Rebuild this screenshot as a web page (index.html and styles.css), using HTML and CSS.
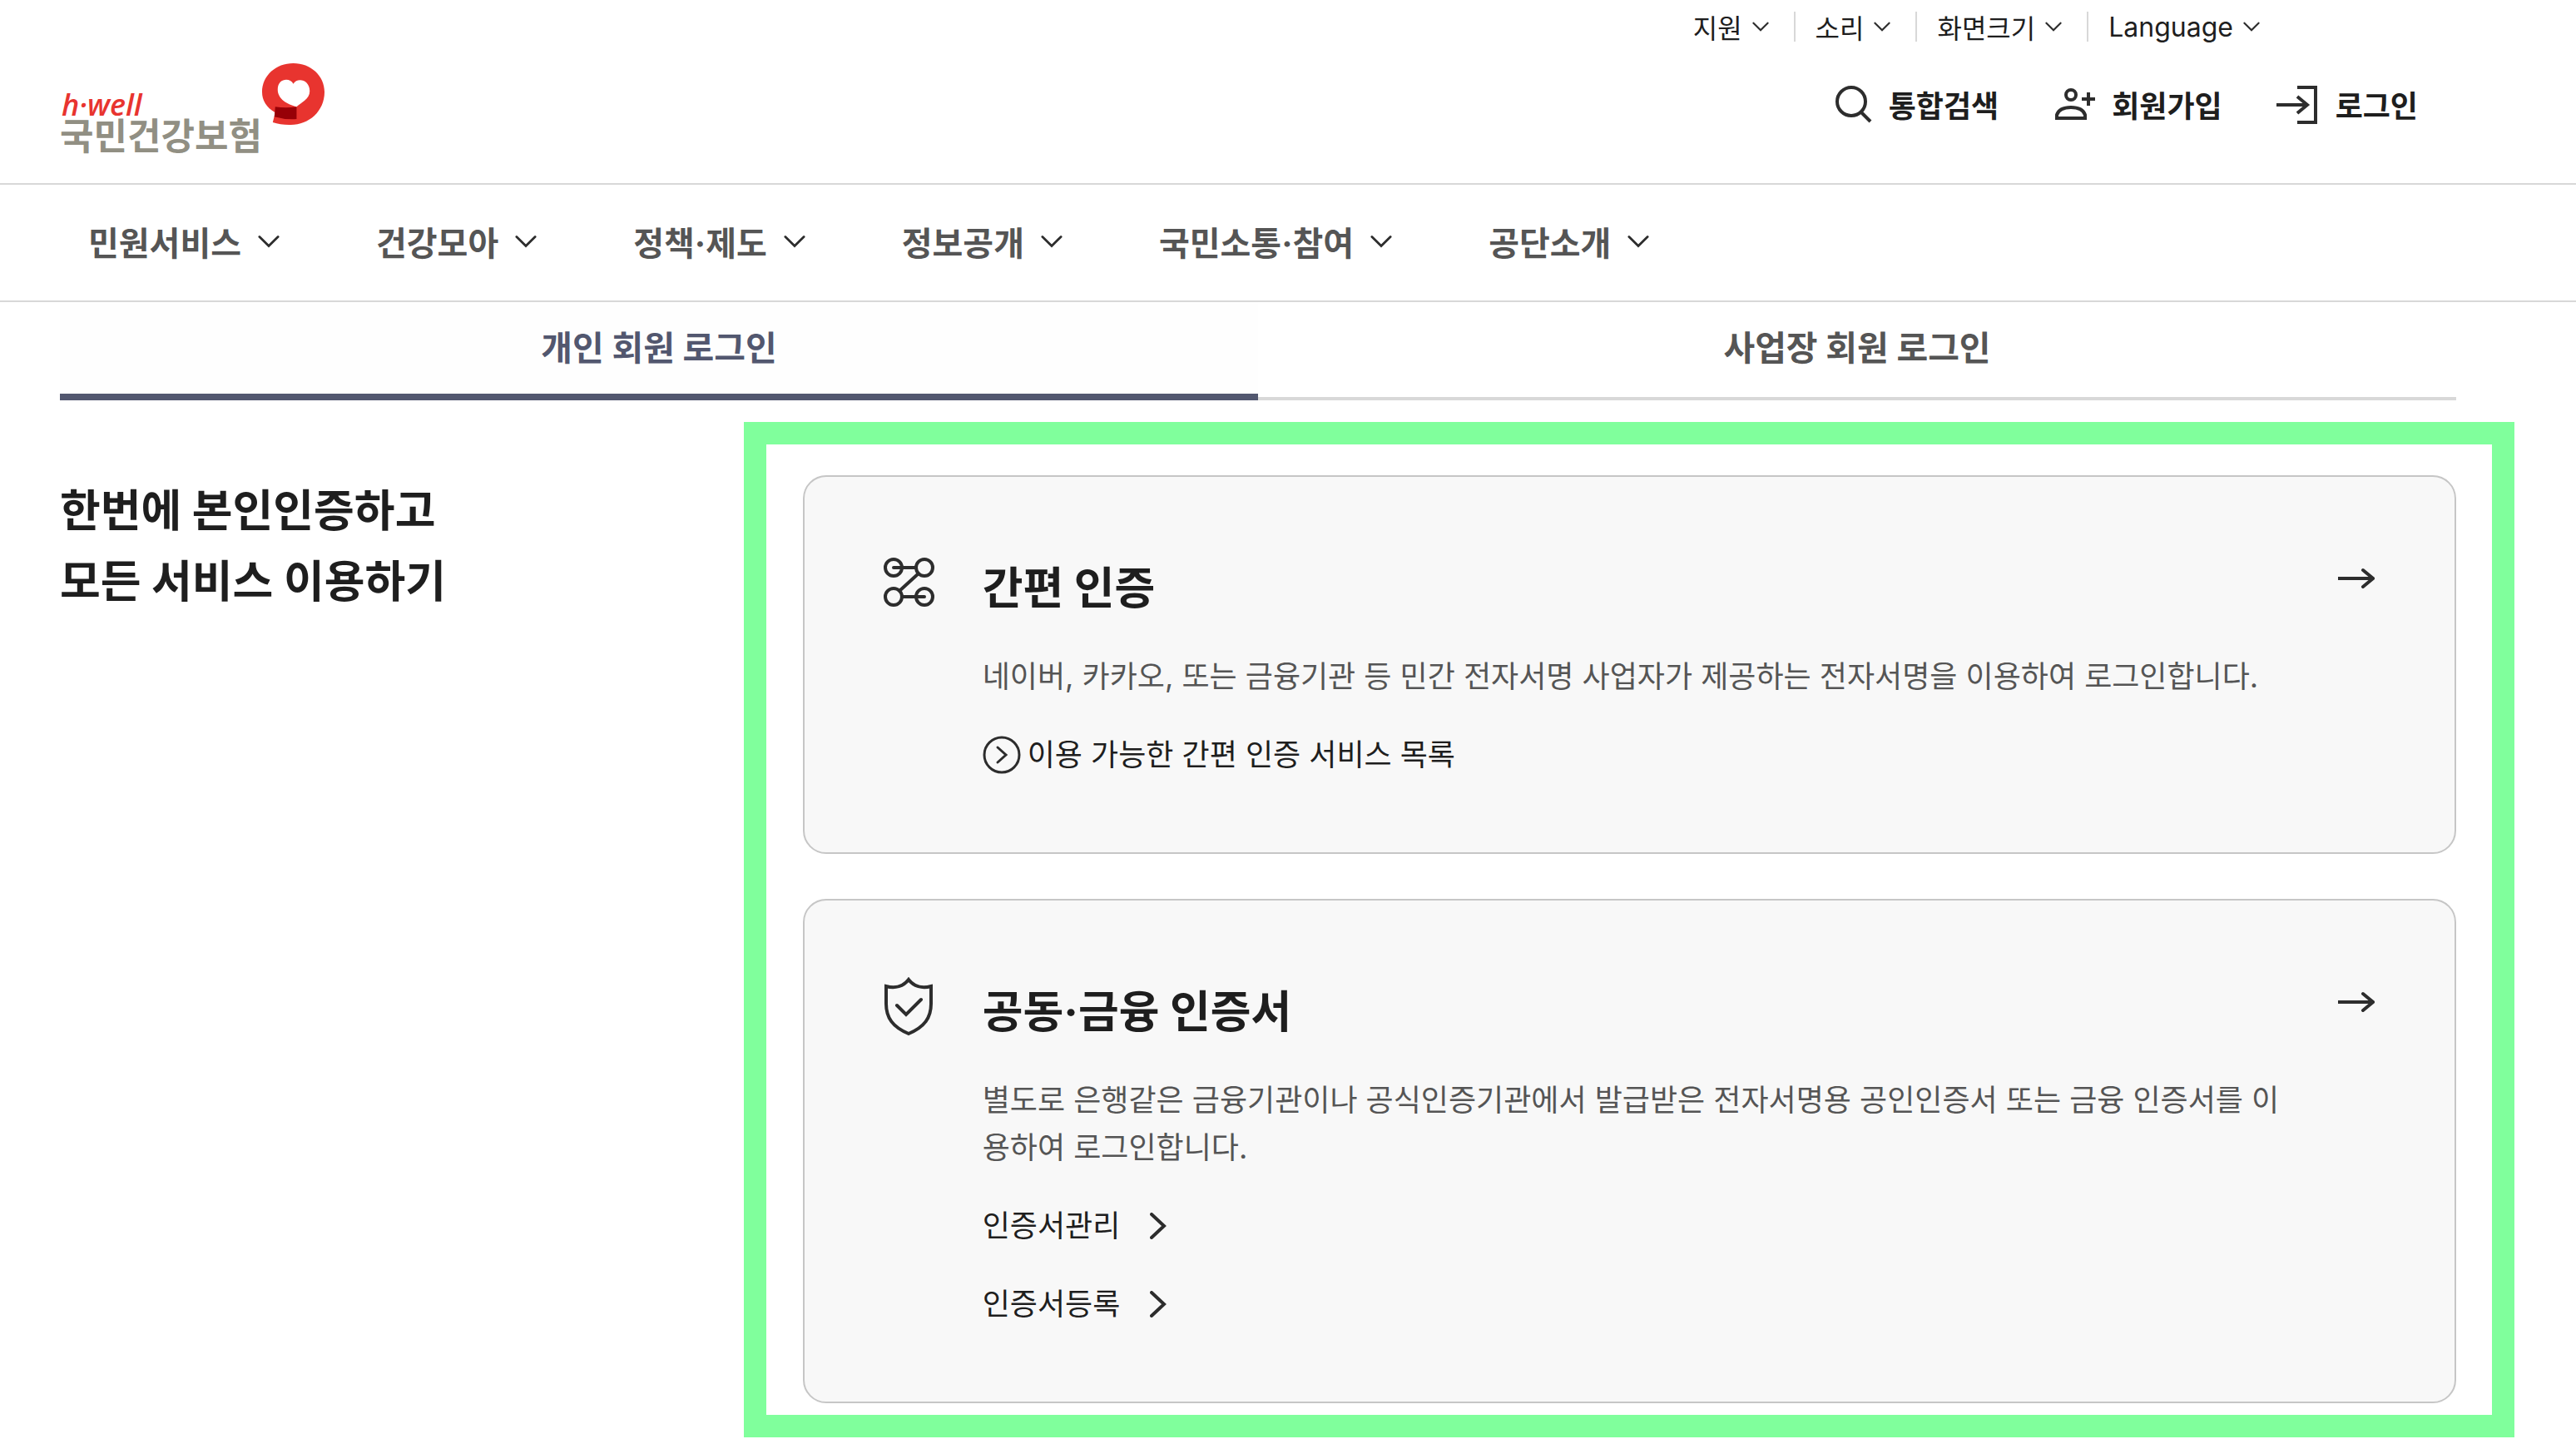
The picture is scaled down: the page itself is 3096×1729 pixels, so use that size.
FILE: index.html
```html
<!DOCTYPE html>
<html lang="ko">
<head>
    <meta charset="UTF-8">
    <meta name="viewport" content="width=device-width, initial-scale=1.0">
    <title>로그인 | 국민건강보험</title>
    <link rel="stylesheet" href="styles.css">
</head>
<body>
    <!-- shared icons -->
    <svg class="sprite" aria-hidden="true">
        <symbol id="chevron" viewBox="0 0 28 16"><path d="M2 2l12 12L26 2"/></symbol>
        <symbol id="next" viewBox="0 0 20 32"><path d="M2 2l15 14L2 30"/></symbol>
        <symbol id="arrow" viewBox="0 0 44 26"><path d="M0 13h41M30 3l12 10L30 23"/></symbol>
    </svg>

    <header>
        <div class="header-top">
            <a href="#" class="logo">
                <span class="logo-text">
                    <span class="logo-en">h·well</span>
                    <span class="logo-ko">국민건강보험</span>
                </span>
                <svg class="logo-mark" viewBox="0 0 76 76">
                    <path fill="#e8342f" d="M38 0C59 0 76 15 76 35C76 59 56 76 33 75Q22 75 13 72L16 60C5 54 0 45 0 35C0 15 17 0 38 0z"/>
                    <path fill="#970007" d="M16 53q13 2 26 0v15q-13 1-27-3z"/>
                    <path fill="#fff" d="M38 25C43 17 58 20 58 34C58 44 47 48 42 53C31 50 19 44 19 32C19 18 34 17 38 25z"/>
                </svg>
            </a>
            <div class="header-right">
                <div class="util">
                    <button type="button">지원 <svg class="chevron"><use href="#chevron"/></svg></button>
                    <button type="button">소리 <svg class="chevron"><use href="#chevron"/></svg></button>
                    <button type="button">화면크기 <svg class="chevron"><use href="#chevron"/></svg></button>
                    <button type="button">Language <svg class="chevron"><use href="#chevron"/></svg></button>
                </div>
                <div class="member">
                    <a href="#">
                        <svg viewBox="0 0 52 52"><circle cx="27" cy="23" r="17"/><path d="M39 36l11 11"/></svg>
                        통합검색
                    </a>
                    <a href="#">
                        <svg viewBox="0 0 52 52"><circle cx="23" cy="15" r="6"/><path d="M6 43v-4q3-9 17-9t17 9v4zM44 12v16M36 20h16"/></svg>
                        회원가입
                    </a>
                    <a href="#">
                        <svg viewBox="0 0 52 52"><path d="M1 27h37M26 17l12 10-12 10M26 6h22v42H26"/></svg>
                        로그인
                    </a>
                </div>
            </div>
        </div>
        <nav class="gnb">
            <button type="button">민원서비스 <svg class="chevron"><use href="#chevron"/></svg></button>
            <button type="button">건강모아 <svg class="chevron"><use href="#chevron"/></svg></button>
            <button type="button">정책·제도 <svg class="chevron"><use href="#chevron"/></svg></button>
            <button type="button">정보공개 <svg class="chevron"><use href="#chevron"/></svg></button>
            <button type="button">국민소통·참여 <svg class="chevron"><use href="#chevron"/></svg></button>
            <button type="button">공단소개 <svg class="chevron"><use href="#chevron"/></svg></button>
        </nav>
    </header>

    <main>
        <div class="tabs">
            <button type="button" class="active">개인 회원 로그인</button>
            <button type="button">사업장 회원 로그인</button>
        </div>

        <div class="login">
            <h1>한번에 본인인증하고<br>모든 서비스 이용하기</h1>

            <div class="methods">
                <section class="card">
                    <svg class="card-icon" viewBox="0 0 72 72">
                        <circle cx="17" cy="17" r="10"/><circle cx="54" cy="17" r="10"/>
                        <circle cx="17" cy="52" r="10"/><circle cx="54" cy="52" r="10"/>
                        <path d="M17 17h27M47 24L24 45M27 52h27"/>
                    </svg>
                    <div class="card-body">
                        <h2>간편 인증</h2>
                        <p>네이버, 카카오, 또는 금융기관 등 민간 전자서명 사업자가 제공하는 전자서명을 이용하여 로그인합니다.</p>
                        <a href="#" class="list-link">
                            <svg viewBox="0 0 46 46"><circle cx="23" cy="23" r="21"/><path d="M18 14l10 9-10 9"/></svg>
                            이용 가능한 간편 인증 서비스 목록
                        </a>
                    </div>
                    <a href="#" class="go" aria-label="간편 인증"><svg><use href="#arrow"/></svg></a>
                </section>

                <section class="card">
                    <svg class="card-icon" viewBox="0 0 72 72">
                        <path d="M35 3C29 11 19 14 8 11V32C8 49 16 60 35 68C54 60 62 49 62 32V11C51 14 41 11 35 3zM21 34l11 11 18-18"/>
                    </svg>
                    <div class="card-body">
                        <h2>공동·금융 인증서</h2>
                        <p>별도로 은행같은 금융기관이나 공식인증기관에서 발급받은 전자서명용 공인인증서 또는 금융 인증서를 이용하여 로그인합니다.</p>
                        <a href="#" class="cert-link">인증서관리 <svg><use href="#next"/></svg></a>
                        <a href="#" class="cert-link">인증서등록 <svg><use href="#next"/></svg></a>
                    </div>
                    <a href="#" class="go" aria-label="공동·금융 인증서"><svg><use href="#arrow"/></svg></a>
                </section>
            </div>
        </div>
    </main>
</body>
</html>
```

FILE: styles.css
```css
* {
    box-sizing: border-box;
}

body {
    margin: 0;
    background-color: #fff;
    font-family: Inter, "Noto Sans CJK KR", sans-serif;
    font-size: 36px;
    color: #1e1e1e;
}

a {
    color: inherit;
    text-decoration: none;
}

button {
    padding: 0;
    border: none;
    background: none;
    font-family: inherit;
    color: inherit;
    cursor: pointer;
}

svg {
    flex: none;
    fill: none;
    stroke: #2d2d2d;
    stroke-width: 4;
    stroke-linecap: round;
}

.sprite {
    display: none;
}

.chevron {
    width: 26px;
    height: 16px;
    stroke-width: 3;
}

/* header */
.header-top {
    display: flex;
    justify-content: space-between;
    height: 220px;
    padding: 0 190px 0 72px;
}

.logo {
    display: flex;
    align-items: flex-start;
    padding-top: 76px;
}

.logo-text {
    display: flex;
    flex-direction: column;
    padding-top: 34px;
}

.logo-en {
    padding-left: 2px;
    font-family: "Open Sans", sans-serif;
    font-size: 36px;
    font-style: italic;
    font-weight: 600;
    line-height: 32px;
    color: #e8342f;
}

.logo-ko {
    font-size: 44px;
    font-weight: 700;
    line-height: 44px;
    color: #918f83;
}

.logo-mark {
    width: 75px;
    height: 75px;
    stroke: none;
}

.header-right {
    display: flex;
    flex-direction: column;
}

.util {
    display: flex;
    align-items: center;
    height: 64px;
    padding-right: 160px;
}

.util button {
    display: flex;
    align-items: center;
    gap: 12px;
    height: 36px;
    padding: 0 30px 0 24px;
    border-left: 2px solid #d8d8d8;
    font-size: 32px;
}

.util button:first-child {
    padding-left: 0;
    border-left: none;
}

.util .chevron {
    width: 20px;
    height: 12px;
}

.member {
    display: flex;
    justify-content: flex-end;
    gap: 64px;
    font-weight: 700;
}

.member a {
    display: flex;
    align-items: center;
    gap: 20px;
    height: 122px;
}

.member svg {
    width: 52px;
    height: 52px;
    stroke-linecap: butt;
}

.gnb {
    display: flex;
    gap: 116px;
    height: 143px;
    padding: 0 106px 3px;
    border-top: 2px solid #d8d8d8;
    border-bottom: 2px solid #d8d8d8;
}

.gnb button {
    display: flex;
    align-items: center;
    gap: 20px;
    font-size: 40px;
    font-weight: 700;
    color: #555;
}

/* login */
main {
    padding: 0 144px 0 72px;
}

.tabs {
    display: flex;
}

.tabs button {
    flex: 1;
    height: 118px;
    padding-bottom: 10px;
    border-bottom: 4px solid #d8d8d8;
    font-size: 41px;
    font-weight: 700;
    color: #555;
}

.tabs .active {
    padding-bottom: 6px;
    border-bottom: 8px solid #52576f;
    background-color: #fefefe;
    color: #52576f;
}

.login {
    display: flex;
    justify-content: space-between;
    padding-top: 26px;
}

h1 {
    margin: 65px 0 0;
    font-size: 53px;
    font-weight: 700;
    line-height: 85px;
}

.methods {
    display: flex;
    flex-direction: column;
    gap: 54px;
    width: 73.9%;
    margin-right: -70px;
    padding: 37px 43px 14px 44px;
    border: 27px solid #80ff9c;
}

.card {
    display: flex;
    align-items: flex-start;
    padding: 92px 96px 88px 90px;
    border: 2px solid #c6c6c6;
    border-radius: 28px;
    background-color: #f8f8f8;
}

.card-icon {
    width: 72px;
    height: 72px;
}

.card-body {
    flex: 1;
    padding: 0 50px 0 52px;
}

h2 {
    margin: 2px 0 38px;
    font-size: 53px;
    font-weight: 700;
    line-height: 80px;
}

p {
    margin: 0 0 36px;
    line-height: 57px;
    color: #555;
}

.list-link,
.cert-link {
    display: flex;
    align-items: center;
    line-height: 58px;
}

.list-link {
    gap: 8px;
}

.list-link svg {
    width: 46px;
    height: 46px;
    stroke-width: 3;
}

.cert-link {
    gap: 36px;
}

.cert-link + .cert-link {
    margin-top: 36px;
}

.cert-link svg {
    width: 20px;
    height: 32px;
}

.go {
    display: flex;
    padding-top: 17px;
}

.go svg {
    width: 44px;
    height: 26px;
}
```
